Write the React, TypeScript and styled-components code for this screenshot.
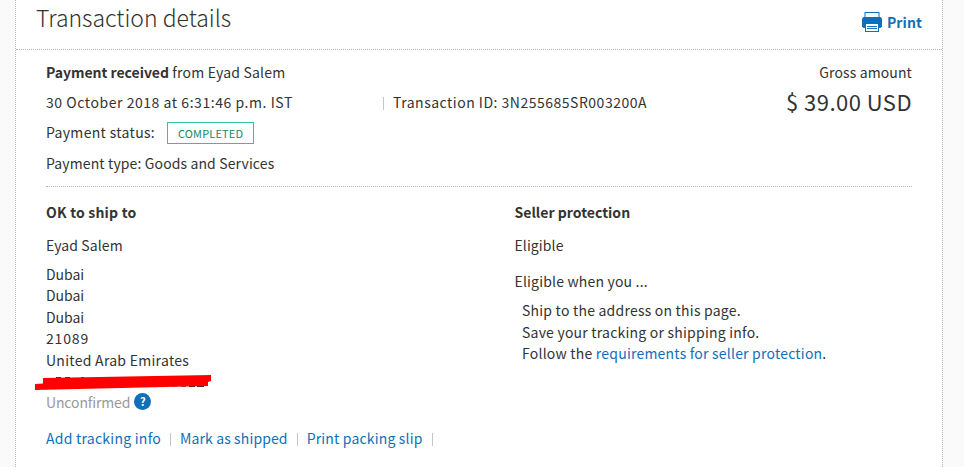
import React from 'react';
import styled, { createGlobalStyle } from 'styled-components';

const GlobalStyle = createGlobalStyle`
  * { box-sizing: border-box; }
  body {
    margin: 0;
    background: #fafafa;
    color: #333;
    font: 14px/20px "Noto Sans CJK SC", "Noto Sans", sans-serif;
    overflow: hidden;
  }
`;

const Card = styled.main`
  width: 928px;
  height: 467px;
  margin-left: 15px;
  background: #fff;
  border: 1px dotted #b4b4b4;
  border-width: 0 1px;
`;

const Header = styled.header`
  display: flex;
  justify-content: space-between;
  height: 50px;
  padding: 0 20px;
  border-bottom: 1px dotted #b4b4b4;
`;

const Title = styled.h1`
  margin: 0;
  font-size: 23px;
  font-weight: 300;
  line-height: 34px;
  letter-spacing: 0;
`;

const PrintLink = styled.a`
  display: flex;
  gap: 5px;
  padding-top: 12px;
  color: #0f70b7;
  font-weight: 700;
  letter-spacing: 0.1px;
`;

const Section = styled.section`
  margin: 0 30px;
`;

const Summary = styled(Section)`
  display: flex;
  justify-content: space-between;
  height: 137px;
  padding-top: 12px;
  border-bottom: 1px dotted #b4b4b4;
`;

const Details = styled(Section)`
  display: grid;
  grid-template-columns: 468.5px 1fr;
  padding-top: 15px;
`;

const Line = styled.div<{ $gap?: number; $track?: number }>`
  display: flex;
  height: 20px;
  margin-top: ${(p) => p.$gap ?? 0}px;
  letter-spacing: ${(p) => p.$track ?? 0.1}px;
  white-space: pre;
`;

const Heading = styled.h2<{ $track?: number }>`
  margin: 0;
  height: 20px;
  font-size: 14px;
  font-weight: 700;
  letter-spacing: ${(p) => p.$track ?? 0.02}px;
`;

const Timestamp = styled.span`
  width: 328px;
  letter-spacing: 0.55px;
`;

const Separator = styled.i`
  width: 1px;
  height: 13px;
  margin: 5px 9px 0 9px;
  background: #c4c4c4;
`;

const Badge = styled.span`
  width: 87px;
  height: 22px;
  margin-left: 12px;
  border: 1px solid #2ac79b;
  color: #138a62;
  font-size: 11px;
  line-height: 21px;
  letter-spacing: 0.15px;
  text-align: center;
`;

const Amount = styled.div`
  text-align: right;
  letter-spacing: 0.12px;
`;

const Total = styled.div`
  margin-top: 6px;
  font-size: 22px;
  line-height: 26px;
  letter-spacing: 0.46px;
`;

const Link = styled.a<{ $track?: number }>`
  color: #0f70b7;
  letter-spacing: ${(p) => p.$track ?? 0.21}px;
`;

const Address = styled.div`
  margin-top: 8.5px;
  line-height: 21.5px;
  letter-spacing: -0.04px;
`;

const Tracked = styled.span<{ $track: number }>`
  letter-spacing: ${(p) => p.$track}px;
`;

const Steps = styled.div`
  margin: 9px 0 0 7.5px;
  line-height: 21.5px;
  letter-spacing: 0.22px;
`;

const Phone = styled.div`
  position: relative;
  height: 21px;
`;

const Redaction = styled.svg`
  position: absolute;
  left: -11px;
  top: 3px;
`;

const Muted = styled.span`
  color: #999;
  letter-spacing: -0.13px;
`;

const Help = styled.span`
  width: 17px;
  height: 17px;
  margin: 1px 0 0 4px;
  border-radius: 50%;
  background: #0f70b7;
  color: #fff;
  font-size: 11px;
  font-weight: 700;
  line-height: 16px;
  letter-spacing: 0;
  text-align: center;
`;

const PrinterIcon = () => (
  <svg width="20" height="20" viewBox="0 0 20 20" fill="#0f70b7">
    <path d="M2.500 0h15v5h-15z" />
    <path d="M3.500 1h13V5H3.500z" fill="#fff" />
    <path d="M1.500 5h17L20 6.500V14.500L18.500 16H1.500L0 14.500V6.500z" />
    <path d="M3 11h14v9H3z" />
    <path d="M4 12h12v7H4z" fill="#fff" />
    <path d="M5 14h10v1H5zM5 16h10v1H5z" />
  </svg>
);

export default function App() {
  return (
    <>
      <GlobalStyle />
      <Card>
        <Header>
          <Title>Transaction details</Title>
          <PrintLink>
            <PrinterIcon />
            <span>Print</span>
          </PrintLink>
        </Header>
        <Summary>
          <div>
            <Line $track={0.2}>
              <Tracked as="b" $track={-0.02}>Payment received</Tracked> from Eyad Salem
            </Line>
            <Line $gap={10}>
              <Timestamp>30 October 2018 at 6:31:46 p.m. IST</Timestamp>
              <Separator />
              <Tracked $track={0.5}>Transaction ID: 3N255685SR003200A</Tracked>
            </Line>
            <Line $gap={10} $track={0.33}>
              <span>Payment status:</span>
              <Badge>COMPLETED</Badge>
            </Line>
            <Line $gap={11} $track={0.12}>Payment type: Goods and Services</Line>
          </div>
          <Amount>
            <div>Gross amount</div>
            <Total>$ 39.00 USD</Total>
          </Amount>
        </Summary>
        <Details>
          <div>
            <Heading $track={0.2}>OK to ship to</Heading>
            <Line $gap={13}>Eyad Salem</Line>
            <Address>
              <div>Dubai</div>
              <div>Dubai</div>
              <div>Dubai</div>
              <Tracked as="div" $track={0.83}>21089</Tracked>
              <Tracked as="div" $track={0.28}>United Arab Emirates</Tracked>
            </Address>
            <Phone>
              <Redaction width="178" height="17" viewBox="35 374 178 17">
                <path
                  d="M56 377.700h5M65 377.700h5M81 377.700h3M172 386h5M181 386.200h5M189 386.300h6M197 386.400h7"
                  stroke="#333"
                  strokeWidth="1.200"
                />
                <path d="M43 378L211 375V381L208 382V386L35 390V384L43 383.500Z" fill="#f00" />
              </Redaction>
            </Phone>
            <Line>
              <Muted>Unconfirmed</Muted>
              <Help>?</Help>
            </Line>
            <Line $gap={16}>
              <Link $track={0.25}>Add tracking info</Link>
              <Separator />
              <Link $track={0.12}>Mark as shipped</Link>
              <Separator />
              <Link $track={0.17}>Print packing slip</Link>
              <Separator />
            </Line>
          </div>
          <div>
            <Heading>Seller protection</Heading>
            <Line $gap={13}>Eligible</Line>
            <Line $gap={16} $track={0.18}>Eligible when you ...</Line>
            <Steps>
              <div>Ship to the address on this page.</div>
              <div>Save your tracking or shipping info.</div>
              <div>Follow the <Link>requirements for seller protection</Link>.</div>
            </Steps>
          </div>
        </Details>
      </Card>
    </>
  );
}
